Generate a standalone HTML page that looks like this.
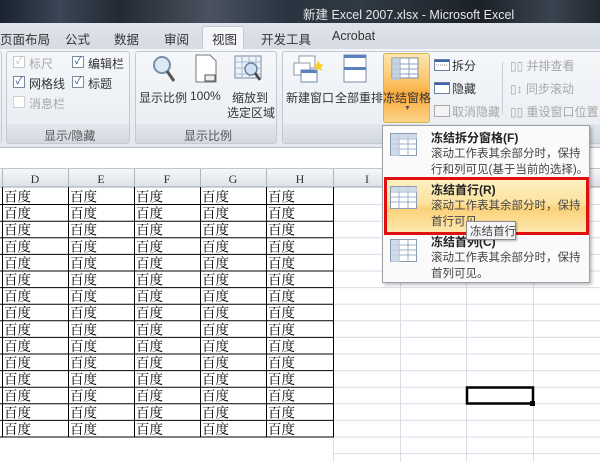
<!DOCTYPE html>
<html><head><meta charset="utf-8"><style>
*{margin:0;padding:0;box-sizing:border-box}
body{width:600px;height:462px;overflow:hidden;background:#fff;position:relative;font-family:"Liberation Sans","Noto Sans CJK SC",sans-serif;}
.a{position:absolute;white-space:nowrap}
.t{font-size:12px;color:#333}
.m{font-size:11.5px;color:#444}
.cb{position:absolute;width:12px;height:12px;border:1px solid #7a8aa0;background:#fff;font-size:10px;line-height:10px;text-align:center;color:#2a4a8a}
.g{color:#a8a8a8}
</style></head><body>
<div class="a" style="left:0;top:0;width:600px;height:23px;background:linear-gradient(90deg,#1a2230 0%,#3a4656 10%,#222a33 20%,#4a5260 35%,#2a3440 48%,#303a44 60%,#1c2128 80%,#3a4450 92%,#202830 100%)"></div>
<div class="a" style="left:303px;top:4px;font-size:12.5px;color:#e8e8e8">新建 Excel 2007.xlsx - Microsoft Excel</div>
<div class="a" style="left:0;top:23px;width:600px;height:26px;background:linear-gradient(#dfe3ea,#d6dbe3)"></div>
<div class="a" style="left:202px;top:26px;width:42px;height:24px;background:#f4f6f9;border:1px solid #c4cad3;border-bottom:none;border-radius:3px 3px 0 0"></div>
<div class="a t" style="left:0;top:29px;font-size:12.5px">页面布局</div>
<div class="a t" style="left:65px;top:29px;font-size:12.5px">公式</div>
<div class="a t" style="left:114px;top:29px;font-size:12.5px">数据</div>
<div class="a t" style="left:164px;top:29px;font-size:12.5px">审阅</div>
<div class="a t" style="left:212px;top:29px;font-size:12.5px">视图</div>
<div class="a t" style="left:261px;top:29px;font-size:12.5px">开发工具</div>
<div class="a t" style="left:332px;top:29px;font-size:12.5px">Acrobat</div>
<div class="a" style="left:0;top:49px;width:600px;height:99px;background:linear-gradient(#f3f5f8,#e4e8ee);border-bottom:1px solid #b8bec8"></div>
<div class="a" style="left:-4px;top:51px;width:6px;height:92px;border:1px solid #c3c9d2;border-radius:3px"></div>
<div class="a" style="left:6px;top:51px;width:124px;height:93px;border:1px solid #c3c9d2;border-radius:3px;background:linear-gradient(#f5f7fa,#e8ecf1)"></div>
<div class="a" style="left:7px;top:124px;width:122px;height:19px;background:linear-gradient(#e2e6ed,#d4d9e1)"></div>
<div class="a t" style="left:44px;top:127px;color:#555">显示/隐藏</div>
<div class="a" style="left:135px;top:51px;width:142px;height:93px;border:1px solid #c3c9d2;border-radius:3px;background:linear-gradient(#f5f7fa,#e8ecf1)"></div>
<div class="a" style="left:136px;top:124px;width:140px;height:19px;background:linear-gradient(#e2e6ed,#d4d9e1)"></div>
<div class="a t" style="left:184px;top:127px;color:#555">显示比例</div>
<div class="a" style="left:282px;top:51px;width:330px;height:93px;border:1px solid #c3c9d2;border-radius:3px;background:linear-gradient(#f5f7fa,#e8ecf1)"></div>
<div class="a" style="left:283px;top:124px;width:320px;height:19px;background:linear-gradient(#e2e6ed,#d4d9e1)"></div>
<div class="cb" style="left:13px;top:56px;border-color:#c8c8c8;color:#bbb">✓</div><div class="a t g" style="left:29px;top:55px">标尺</div>
<div class="cb" style="left:72px;top:56px">✓</div><div class="a t" style="left:88px;top:55px">编辑栏</div>
<div class="cb" style="left:13px;top:76px">✓</div><div class="a t" style="left:29px;top:75px">网格线</div>
<div class="cb" style="left:72px;top:76px">✓</div><div class="a t" style="left:88px;top:75px">标题</div>
<div class="cb" style="left:13px;top:96px;border-color:#d0d0d0"></div><div class="a t g" style="left:29px;top:95px">消息栏</div>
<svg class="a" style="left:150px;top:54px" width="30" height="30"><circle cx="12" cy="11" r="8" fill="#dbe8f5" stroke="#7890a8" stroke-width="2"/><line x1="17" y1="17" x2="24" y2="27" stroke="#555" stroke-width="3"/></svg>
<svg class="a" style="left:193px;top:54px" width="26" height="30"><path d="M3 1h14l6 6v21H3z" fill="#fff" stroke="#777"/><rect x="12" y="21" width="10" height="6" fill="#eee" stroke="#555"/></svg>
<svg class="a" style="left:234px;top:54px" width="30" height="30"><rect x="1" y="2" width="26" height="22" fill="#eef3fa" stroke="#7a8ca4"/><path d="M1 8h26M1 14h26M1 20h26M8 2v22M15 2v22M22 2v22" stroke="#a8b8cc"/><circle cx="17" cy="15" r="6" fill="#cfe0f2" stroke="#6a84a0" stroke-width="1.5"/><line x1="21" y1="19" x2="26" y2="26" stroke="#444" stroke-width="2.5"/></svg>
<div class="a t" style="left:139px;top:89px">显示比例</div>
<div class="a t" style="left:190px;top:89px">100%</div>
<div class="a t" style="left:232px;top:89px">缩放到</div>
<div class="a t" style="left:227px;top:104px">选定区域</div>
<svg class="a" style="left:293px;top:54px" width="32" height="30"><rect x="6" y="2" width="16" height="12" fill="#fff" stroke="#8a98a8"/><rect x="1" y="9" width="16" height="12" fill="#fff" stroke="#8a98a8"/><rect x="8" y="16" width="16" height="12" fill="#fff" stroke="#6a88b0"/><rect x="8" y="16" width="16" height="3" fill="#5a80c0"/><path d="M25 6l2 4 4 1-3 2 1 4-4-2-3 2 1-4-3-2 4-1z" fill="#f8d030"/></svg>
<svg class="a" style="left:342px;top:54px" width="28" height="30"><rect x="2" y="1" width="22" height="27" fill="#fff" stroke="#7a8ca4"/><rect x="2" y="1" width="22" height="3" fill="#5a80c0"/><rect x="2" y="13" width="22" height="3" fill="#5a80c0"/></svg>
<div class="a t" style="left:286px;top:89px">新建窗口</div>
<div class="a t" style="left:335px;top:89px">全部重排</div>
<div class="a" style="left:383px;top:53px;width:47px;height:70px;border:1px solid #d8b050;border-radius:3px;background:linear-gradient(#fde7b0,#fbc060 45%,#f9a83a 60%,#fcd68a)"></div>
<svg class="a" style="left:391px;top:57px" width="30" height="26"><rect x="1" y="1" width="26" height="20" fill="#fff" stroke="#7a8ca4"/><path d="M1 7h26M1 12h26M1 17h26M9 1v20M18 1v20" stroke="#8aa0bc"/><rect x="1" y="1" width="8" height="22" fill="#b8c8dc" opacity=".8"/></svg>
<div class="a t" style="left:383px;top:89px">冻结窗格</div>
<div class="a" style="left:404px;top:105px;font-size:7px;color:#555">▼</div>
<svg class="a" style="left:434px;top:59px" width="16" height="12"><rect x=".5" y=".5" width="15" height="11" fill="#fff" stroke="#6a80a0"/><rect x="1" y="1" width="14" height="2" fill="#3a64b0"/><path d="M2 6h12" stroke="#888" stroke-dasharray="1 1"/></svg><div class="a t" style="left:452px;top:57px">拆分</div>
<svg class="a" style="left:434px;top:82px" width="16" height="12"><rect x=".5" y=".5" width="15" height="11" fill="#fff" stroke="#6a80a0"/><rect x="1" y="1" width="14" height="2" fill="#3a64b0"/></svg><div class="a t" style="left:452px;top:80px">隐藏</div>
<svg class="a" style="left:434px;top:105px" width="16" height="12"><rect x=".5" y=".5" width="15" height="11" fill="#f4f4f4" stroke="#aaa"/></svg><div class="a t g" style="left:452px;top:103px">取消隐藏</div>
<div class="a" style="left:502px;top:62px;width:1px;height:52px;background:#c8ccd4"></div>
<div class="a t g" style="left:510px;top:57px">▯▯ 并排查看</div>
<div class="a t g" style="left:510px;top:80px">▯↕ 同步滚动</div>
<div class="a t g" style="left:510px;top:103px">▯▯ 重设窗口位置</div>
<div class="a" style="left:0;top:149px;width:600px;height:20px;background:#fff;border-bottom:1px solid #c0c6cf"></div>
<svg class="a" style="left:0;top:169px" width="600" height="293">
<defs><linearGradient id="h" x1="0" y1="0" x2="0" y2="1"><stop offset="0" stop-color="#f6f7f9"/><stop offset="1" stop-color="#dde1e7"/></linearGradient></defs>
<rect x="0" y="0" width="600" height="18" fill="url(#h)"/>
<line x1="0" y1="18" x2="600" y2="18" stroke="#9ea6b2"/>
<g stroke="#b0b7c2"><path d="M2.5 0v18M68.5 0v18M134.5 0v18M200.5 0v18M266.5 0v18M333.5 0v18M400.5 0v18M466.5 0v18M533.5 0v18"/></g>
<g stroke="#dcdce6"><path d="M333.5 18v275M400.5 18v275M466.5 18v275M533.5 18v275"/>
<path d="M333 35.5h267M333 52.2h267M333 68.8h267M333 85.4h267M333 102h267M333 118.6h267M333 135.2h267M333 151.8h267M333 168.4h267M333 185h267M333 201.6h267M333 218.2h267M333 234.8h267M333 251.4h267M333 268h267M333 284.6h267"/></g>
<g stroke="#000"><path d="M2.5 18v250M68.5 18v250M134.5 18v250M200.5 18v250M266.5 18v250M333.5 18v250"/>
<path d="M0 35.5h334M0 52.2h334M0 68.8h334M0 85.4h334M0 102h334M0 118.6h334M0 135.2h334M0 151.8h334M0 168.4h334M0 185h334M0 201.6h334M0 218.2h334M0 234.8h334M0 251.4h334M0 268h334"/></g>
<rect x="467" y="218.5" width="66" height="16" fill="none" stroke="#000" stroke-width="2.5"/>
<rect x="530" y="232" width="5" height="5" fill="#000"/>
<g font-family="Liberation Serif,serif" font-size="12" fill="#333" text-anchor="middle"><text x="35" y="14">D</text><text x="101" y="14">E</text><text x="167" y="14">F</text><text x="233" y="14">G</text><text x="300" y="14">H</text><text x="367" y="14">I</text></g>
<g id="r" font-family="Noto Serif CJK SC,serif" font-size="13.5" fill="#000"></g>
</svg>
<div class="a" style="left:382px;top:125px;width:208px;height:158px;background:#fafafa;border:1px solid #9aa0a8;box-shadow:2px 2px 3px rgba(0,0,0,.25)"></div>
<svg class="a" style="left:390px;top:133px" width="30" height="26"><rect x=".5" y=".5" width="26" height="22" fill="#fff" stroke="#8a9ab0"/><path d="M1 6h26M1 11h26M1 16h26M9 1v22M18 1v22" stroke="#9ab0c8"/><rect x="1" y="1" width="8" height="22" fill="#c4d2e4" opacity=".8"/><rect x="9" y="1" width="18" height="5" fill="#c4d2e4" opacity=".8"/></svg>
<div class="a" style="left:431px;top:129px;font-size:12px;font-weight:bold;color:#222">冻结拆分窗格(F)</div>
<div class="a m" style="left:431px;top:145px">滚动工作表其余部分时，保持</div>
<div class="a m" style="left:431px;top:161px">行和列可见(基于当前的选择)。</div>
<div class="a" style="left:384px;top:177px;width:205px;height:58px;border:3px solid #e01010;background:linear-gradient(#fdf0c0,#fde2a0 45%,#fbd178 55%,#fde8b0)"></div>
<svg class="a" style="left:390px;top:186px" width="30" height="26"><rect x=".5" y=".5" width="26" height="22" fill="#fff" stroke="#8a9ab0"/><path d="M1 6h26M1 11h26M1 16h26M9 1v22M18 1v22" stroke="#9ab0c8"/><rect x="1" y="1" width="26" height="5" fill="#c4d2e4" opacity=".8"/></svg>
<div class="a" style="left:431px;top:181px;font-size:12px;font-weight:bold;color:#222">冻结首行(R)</div>
<div class="a m" style="left:431px;top:197px">滚动工作表其余部分时，保持</div>
<div class="a m" style="left:431px;top:213px">首行可见。</div>
<div class="a" style="left:431px;top:233px;font-size:12px;font-weight:bold;color:#222">冻结首列(C)</div>
<div class="a" style="left:466px;top:221px;width:50px;height:19px;background:#f4f4f6;border:1px solid #8a8a90;font-size:11.5px;color:#444;padding:1px 3px;box-shadow:1px 1px 2px rgba(0,0,0,.3)">冻结首行</div>
<svg class="a" style="left:390px;top:239px" width="30" height="26"><rect x=".5" y=".5" width="26" height="22" fill="#fff" stroke="#8a9ab0"/><path d="M1 6h26M1 11h26M1 16h26M9 1v22M18 1v22" stroke="#9ab0c8"/><rect x="1" y="1" width="8" height="22" fill="#c4d2e4" opacity=".8"/></svg>
<div class="a m" style="left:431px;top:249px">滚动工作表其余部分时，保持</div>
<div class="a m" style="left:431px;top:265px">首列可见。</div>
<script>
var g=document.getElementById('r'),s='';
for(var i=0;i<15;i++){var y=32.5+i*16.6;[4,70,136,202,268].forEach(function(x){s+='<text x="'+x+'" y="'+y.toFixed(1)+'">百度</text>';});}
g.innerHTML=s;
</script>
</body></html>
